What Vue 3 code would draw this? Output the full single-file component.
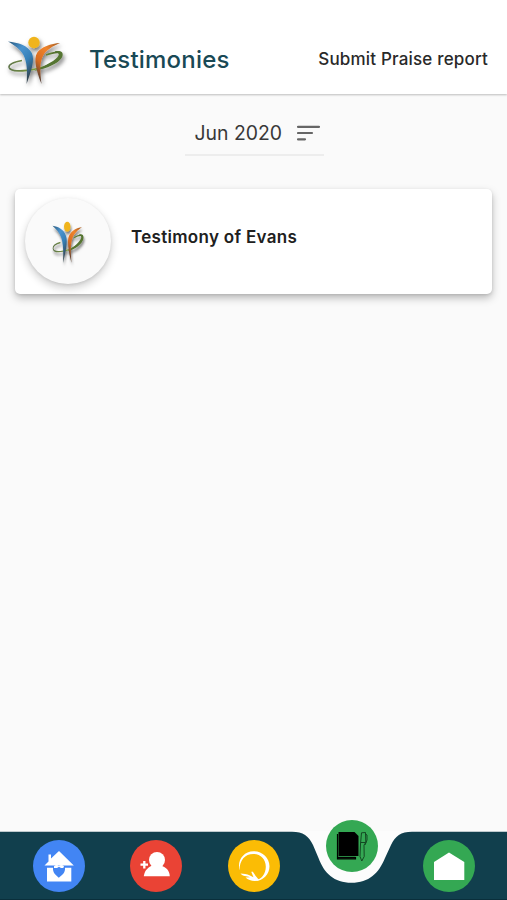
<template>
  <div class="app-screen">
    <!-- Shared logo artwork -->
    <svg class="defs" aria-hidden="true">
      <defs>
        <linearGradient id="blueBody" x1="0" y1="0" x2="0.6" y2="1">
          <stop offset="0" stop-color="#28587c" />
          <stop offset="0.35" stop-color="#4a94cf" />
          <stop offset="0.65" stop-color="#3680b8" />
          <stop offset="1" stop-color="#33444f" />
        </linearGradient>
        <linearGradient id="orangeBody" x1="1" y1="0" x2="0.3" y2="1">
          <stop offset="0" stop-color="#a05a24" />
          <stop offset="0.35" stop-color="#f0842c" />
          <stop offset="0.7" stop-color="#d86c22" />
          <stop offset="1" stop-color="#554036" />
        </linearGradient>
        <linearGradient id="ring" x1="0" y1="0" x2="1" y2="0">
          <stop offset="0" stop-color="#5f7548" />
          <stop offset="0.5" stop-color="#7c9a3e" />
          <stop offset="1" stop-color="#47612a" />
        </linearGradient>
        <filter id="logoShadow" x="-20%" y="-20%" width="150%" height="150%">
          <feDropShadow dx="1.5" dy="3" stdDeviation="2" flood-color="#000" flood-opacity="0.55" />
        </filter>
        <symbol id="logo" viewBox="0 0 76 64" preserveAspectRatio="none">
          <g filter="url(#logoShadow)">
            <path d="M46 27C55 23.800 62 23.300 61.300 27C60 34 43 40.500 27 42.400C17 43.600 9.500 42.500 9 39.200C8.700 36.500 14 34 22 32.500" fill="none" stroke="url(#ring)" stroke-width="1.600" />
            <path d="M55 23.300C61 22.300 63.500 24.300 62.500 28C60.500 35 46 41 34 42.800C46 37.500 56.500 32 58.500 27.500C59.300 25.500 58.500 24.500 55 24.500Z" fill="#557431" />
            <path d="M8 13.500C18 14.500 28 17.500 31.800 25C35 32 31.500 42 26.600 56C27.500 43 27 34 23.500 27C20 21 14 17 8 13.500Z" fill="url(#blueBody)" />
            <path d="M60 15C51 15.500 41 19 37 25C33.500 31 36 42 41.500 56C40 43 39.500 35 43 28C46 22 53 18 60 15Z" fill="url(#orangeBody)" />
            <circle cx="34" cy="14.500" r="5.700" fill="#f0b41c" />
          </g>
        </symbol>
      </defs>
    </svg>

    <header class="app-bar">
      <svg class="logo"><use href="#logo" /></svg>
      <h1 class="title">Testimonies</h1>
      <button class="submit-link">Submit Praise report</button>
    </header>

    <main class="content">
      <button class="month-filter">
        <span>{{ month }}</span>
        <svg class="filter-icon" viewBox="0 0 23 16">
          <path d="M1 1.800h21M1 8h14M1 14.300h7" stroke="#666" stroke-width="2.200" stroke-linecap="round" />
        </svg>
      </button>

      <article v-for="item in testimonies" :key="item.name" class="card">
        <div class="avatar">
          <svg class="avatar-logo"><use href="#logo" /></svg>
        </div>
        <h2 class="card-title">Testimony of {{ item.name }}</h2>
      </article>
    </main>

    <nav class="bottom-nav">
      <svg class="nav-shape" viewBox="0 0 507 69">
        <path d="M290 0H416L385 52H317Z" fill="#fcfcfc" />
        <path d="M0 .7H292C303 .7 309 5 313 14L318.500 27C324 42 334 51.800 351.500 51.800C369 51.800 379 42 385 27L391 14C395 5 401 .7 412 .7H507V69H0Z" fill="#113f4d" />
        <path d="M0 68.500H507" stroke="#0a2f3b" />
      </svg>
      <button
        v-for="tab in tabs"
        :key="tab.id"
        class="tab"
        :class="[tab.id, { active: tab.id === activeTab }]"
        :aria-label="tab.id"
        @click="activeTab = tab.id"
      >
        <svg viewBox="0 0 52 52">
          <g v-if="tab.id === 'home'" fill="#fff">
            <path d="M11.500 25.500L15.500 21.500V14.500H18V18.500L26 11L40.800 25.500Z" />
            <path d="M14 27.800H20C19.500 33 23 35 25.800 37.800C29 35 32.500 33 32 27.800H38.300V41.500H14Z" />
            <path d="M21 26.300C22.500 24.800 24.500 24.600 25.900 26C27.300 24.600 29.500 24.800 31 26.300L30.300 28H28L26 26.800L24 28H21Z" />
          </g>
          <g v-else-if="tab.id === 'members'" fill="#fff">
            <circle cx="27" cy="20" r="8" />
            <path d="M13.800 36.300C14.500 29.500 19 27 22.500 25.500H31C35.500 27 39.500 30 39.800 36.300Z" />
            <path d="M10.500 24.700H18M14.300 21V28.400" stroke="#fff" stroke-width="2.300" />
          </g>
          <g v-else-if="tab.id === 'prayer'">
            <path d="M11.500 30.500C9 20 15.500 11.500 25.500 11.200C34.500 11 41.500 18 41.500 26.200C41.500 34.500 35 41 26.500 41C33.500 39.500 37.800 34 37.800 26.800C37.800 19 32.500 14 25.300 14C17 14 11.500 20 11.500 30.500Z" fill="#fff" />
            <path d="M12.500 33.500C16 34 18.500 33.500 22 35.500L25.500 37.300L23.500 32.500C23 31.200 24.500 31 25.200 32.200C27 35 28.500 37.300 31.500 40C27 42 21 40.800 17.500 37.500L22 37.300C18.500 35.900 15 36.500 12.500 33.500Z" fill="#fff" />
          </g>
          <g v-else-if="tab.id === 'testimonies'">
            <path d="M12.500 12H28.500L32.500 16V36H12.500Z" fill="#000" />
            <path d="M11.500 14V39H29.500V37" fill="none" stroke="#000" stroke-width="1.200" />
            <path d="M12 37.800H29.500" stroke="#000" stroke-width="2" />
            <path d="M35.500 12.800L39.500 12.500L39.800 22.500L38 25L38.200 36.500L35.800 41L34 36.500L34.500 24ZM34.800 22.500H39.500M39.500 14L41 15V20L39 25" fill="none" stroke="#103d1d" stroke-width="0.900" />
          </g>
          <path v-else d="M26 12.500L41.300 22V40H11V22Z" fill="#fff" />
        </svg>
      </button>
    </nav>
  </div>
</template>

<script setup>
import { ref } from 'vue'

const month = ref('Jun 2020')
const activeTab = ref('testimonies')

const testimonies = ref([
  { name: 'Evans' }
])

const tabs = [
  { id: 'home' },
  { id: 'members' },
  { id: 'prayer' },
  { id: 'testimonies' },
  { id: 'church' }
]
</script>

<style>
body {
  margin: 0;
  background: #fafafa;
}
</style>

<style scoped>
.app-screen {
  display: flex;
  flex-direction: column;
  height: 100vh;
  overflow: hidden;
  background: #fafafa;
  font-family: Inter, Roboto, sans-serif;
  color: #222;
}

.defs {
  position: absolute;
  width: 0;
  height: 0;
}

button {
  padding: 0;
  border: 0;
  background: none;
  font-family: inherit;
  cursor: pointer;
}

h1,
h2 {
  margin: 0;
}

.app-bar {
  display: flex;
  align-items: center;
  box-sizing: border-box;
  flex: none;
  height: 94px;
  padding: 26px 19px 0 0;
  background: #fff;
  box-shadow: 0 1px 2px rgba(0, 0, 0, 0.25);
}

.logo {
  width: 76px;
  height: 64px;
  margin-top: -1px;
}

.title {
  margin: 0 0 2px 13px;
  font-size: 24px;
  font-weight: 500;
  letter-spacing: 0.2px;
  color: #194955;
}

.submit-link {
  margin: 0 0 2px auto;
  font-size: 17px;
  font-weight: 500;
  letter-spacing: 0.18px;
  color: #292929;
}

.content {
  display: flex;
  flex: 1;
  flex-direction: column;
  align-items: center;
  padding: 16px 15px 0;
}

.month-filter {
  display: flex;
  align-items: center;
  justify-content: space-between;
  box-sizing: border-box;
  width: 139px;
  height: 46px;
  margin-left: 1px;
  padding: 2px 4px 0 10px;
  border-bottom: 2px solid #ededed;
  font-size: 19.4px;
  color: #383838;
}

.filter-icon {
  width: 23px;
  height: 16px;
}

.card {
  display: flex;
  align-items: center;
  box-sizing: border-box;
  width: 100%;
  height: 105px;
  margin-top: 33px;
  padding-left: 10px;
  border-radius: 5px;
  background: #fff;
  box-shadow: 0 4px 9px rgba(0, 0, 0, 0.26), 0 1px 3px rgba(0, 0, 0, 0.1);
}

.avatar {
  display: flex;
  align-items: center;
  justify-content: center;
  width: 86px;
  height: 86px;
  margin-bottom: 1px;
  border-radius: 50%;
  background: #fafafa;
  box-shadow: 0 4px 8px rgba(0, 0, 0, 0.2), 0 1px 3px rgba(0, 0, 0, 0.08);
}

.avatar-logo {
  width: 43px;
  height: 56px;
  margin: 2px 0 0 3px;
}

.card-title {
  margin: 0 0 10px 20px;
  font-size: 17px;
  font-weight: 600;
  letter-spacing: 0.3px;
  color: #202020;
}

.bottom-nav {
  position: relative;
  display: flex;
  justify-content: space-around;
  box-sizing: border-box;
  flex: none;
  height: 69px;
  padding: 9px 9px 0 10px;
}

.nav-shape {
  position: absolute;
  top: 0;
  left: 0;
  width: 100%;
  height: 100%;
}

.tab {
  position: relative;
  width: 52px;
  height: 52px;
  border-radius: 50%;
}

.tab svg {
  display: block;
}

.tab.active {
  margin-top: -20px;
}

.home {
  background: #4285f4;
}

.members {
  background: #ea4335;
}

.prayer {
  background: #fbbc05;
}

.testimonies,
.church {
  background: #34a853;
}
</style>
